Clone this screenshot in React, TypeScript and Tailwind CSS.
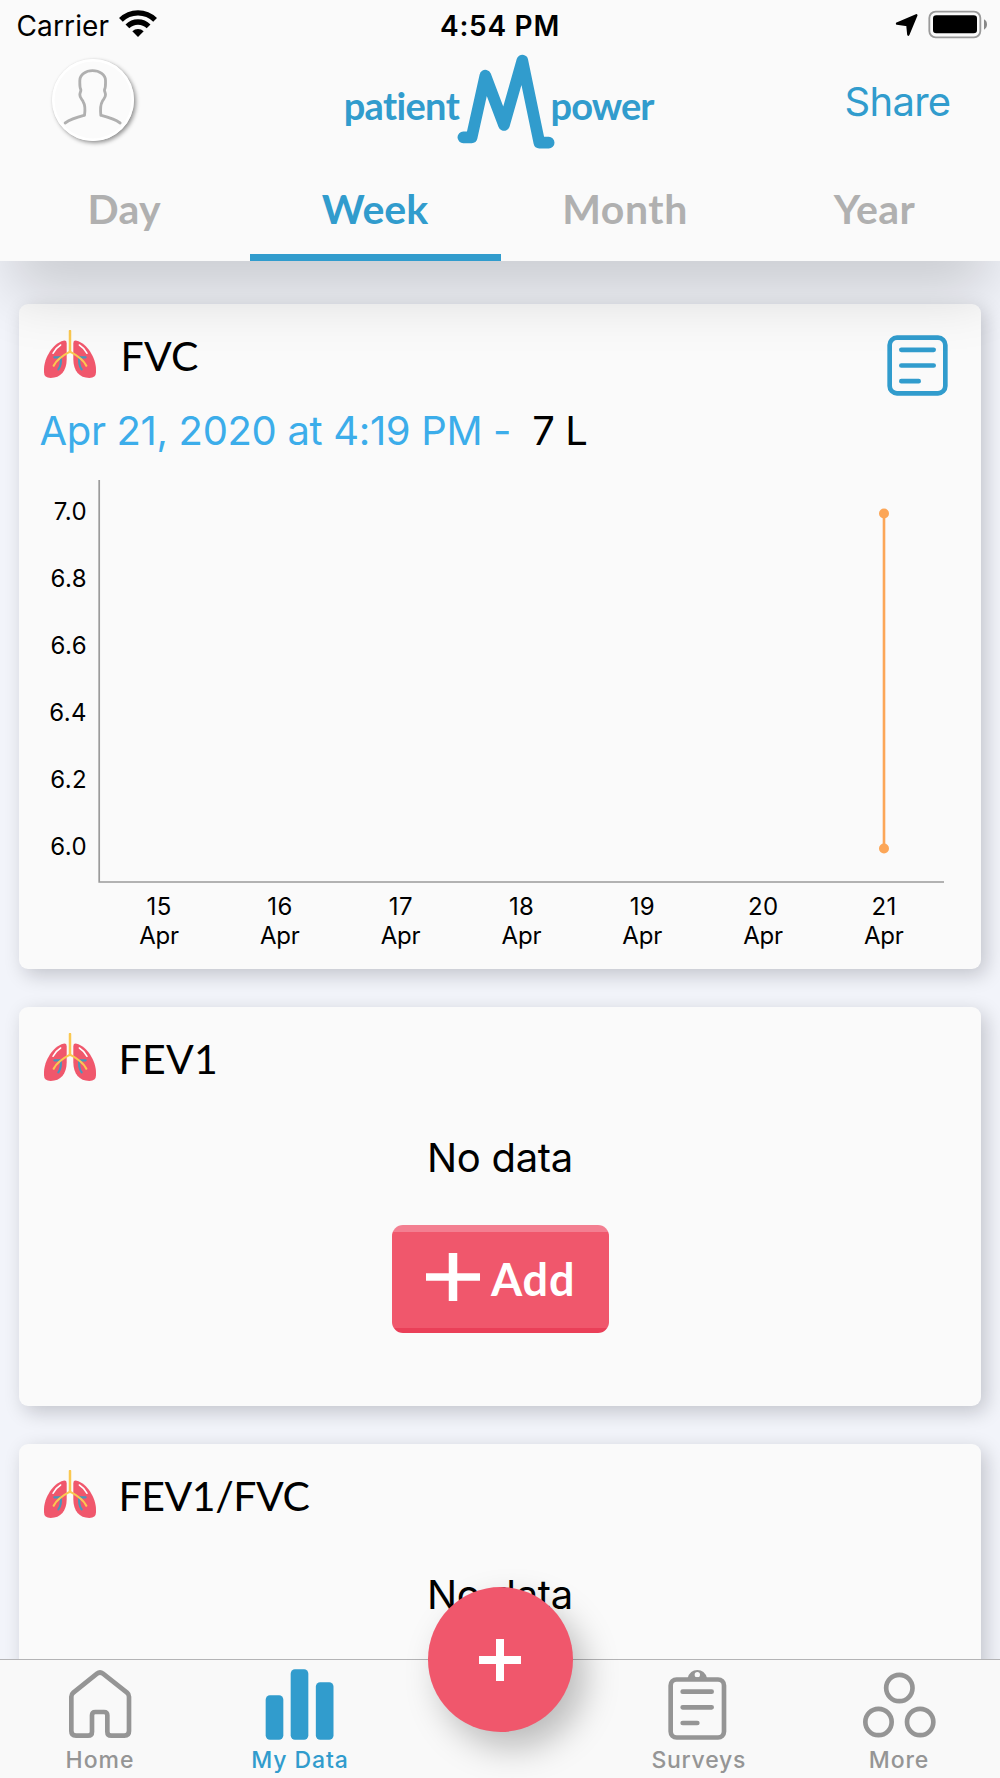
import type { ReactNode } from 'react';

const BLUE = '#319ccd';
const GREY = '#959595';

function StatusBar() {
  return (
    <div className="grid h-[50px] grid-cols-[1fr_340px_1fr] items-center text-[28px] leading-none text-black">
      <div className="flex items-center pl-[16.5px]">
        <span className="pt-[1px] tracking-[0.13px]">Carrier</span>
        <svg className="-mt-[4px] ml-[10px] h-[27px] w-[38px]" viewBox="358 29 114 81" fill="none" stroke="#000">
          <path d="M363.7 58.7A72.5 72.5 0 0 1 466.3 58.7" strokeWidth="16" />
          <path d="M383.2 78.2A45 45 0 0 1 446.8 78.2" strokeWidth="16" />
          <path d="M415 110L398 93A24 24 0 0 1 432 93Z" fill="#000" stroke="none" />
        </svg>
      </div>
      <div className="pt-[1px] text-center font-semibold tracking-[0.75px]">4:54 PM</div>
      <div className="flex items-center justify-end pr-[12px]">
        <svg className="h-[30px] w-[94px]" viewBox="702 29 282 90">
          <path d="M711 70L769 45L745 103L742 74Z" fill="#000" stroke="#000" strokeWidth="7" strokeLinejoin="round" />
          <rect x="808" y="34" width="153" height="77" rx="19" fill="none" stroke="#9a9a9a" strokeWidth="5.5" />
          <rect x="819" y="45" width="132" height="54" rx="10" fill="#000" />
          <path d="M972 57Q981 62 981 72Q981 83 972 88Z" fill="#888" />
        </svg>
      </div>
    </div>
  );
}

function NavBar() {
  return (
    <div className="grid h-[102px] grid-cols-[1fr_340px_1fr] items-center">
      <div className="pl-[51.5px]">
        <div className="-mt-[3px] size-[82px] rounded-full bg-[#fbfbfb] shadow-[2px_2px_4px_rgba(0,0,0,0.42),0_0_2px_rgba(0,0,0,0.06)] ring-[2.5px] ring-white ring-inset">
          <svg className="size-[82px]" viewBox="154.5 174 246 246" fill="none" stroke="#b0b0b0" strokeWidth="8.5" strokeLinecap="round" strokeLinejoin="round">
            <path d="M194 366C213 353 233 348 252 343C255 322 254 312 248 302C243 293 238 290 238 281C238 274 242 271 241 266C237 259 238 252 238 238C238 221 256 209 276 209C297 209 315 221 315 238C315 252 316 259 312 266C311 271 315 274 315 281C315 290 310 293 305 302C299 312 299 322 301 343C320 348 340 353 359 366" />
          </svg>
        </div>
      </div>
      <svg className="h-[102px] w-[340px]" viewBox="330 50 340 102">
        <text x="343.7" y="120" fill={BLUE} className="font-['Lato'] text-[38px] font-bold tracking-[-0.65px]">patient</text>
        <path transform="translate(330 0) scale(0.33333)" d="M400 412H425L466 227L522 375L577 182L628 428H656" fill="none" stroke={BLUE} strokeWidth="35" strokeLinecap="round" strokeLinejoin="round" />
        <text x="550.5" y="120" fill={BLUE} className="font-['Lato'] text-[38px] font-bold tracking-[-0.95px]">power</text>
      </svg>
      <div className="pt-[2px] pr-[49.5px] text-right text-[40px] leading-[50px] tracking-[-0.7px] text-[#319ccd]">Share</div>
    </div>
  );
}

function Tabs() {
  return (
    <div className="grid h-[109px] grid-cols-4 pt-[2px] text-center font-['Lato'] text-[41px] leading-[109px] font-bold text-[#b0b0b0]">
      <div className="-ml-[1.5px] tracking-[0.3px]">Day</div>
      <div className="relative h-[107px] text-[#319ccd]">
        Week
        <div className="absolute bottom-0 left-0 h-[7.5px] w-[251px] bg-[#319ccd]" />
      </div>
      <div className="tracking-[0.56px]">Month</div>
      <div className="-ml-[1px] tracking-[0.45px]">Year</div>
    </div>
  );
}

function LungHalf() {
  return (
    <g fill="none" strokeLinecap="round">
      <path d="M190 149C160 156 132 200 132 235V244Q132 261 152 261C182 261 200 240 200 205V156Q200 147 190 149Z" fill="#f0576c" />
      <path d="M159 187C165 176 172 168 182 162" stroke="#fff" strokeWidth="4.5" />
      <path d="M163 199H181M182 201C184 215 181 227 175 235" stroke="#4697bd" strokeWidth="6.5" />
      <path d="M210 182C193 191 171 204 161 224" stroke="#fac850" strokeWidth="6.5" />
    </g>
  );
}

function Lungs() {
  return (
    <svg className="-mt-[2px] h-[48.67px] w-[52px]" viewBox="132 117 156 146">
      <LungHalf />
      <g transform="translate(420 0) scale(-1 1)">
        <LungHalf />
      </g>
      <path d="M210 120V183" stroke="#fac850" strokeWidth="7.5" strokeLinecap="round" />
    </svg>
  );
}

function CardTitle({ children, className }: { children: ReactNode; className: string }) {
  return (
    <div className="flex h-[50px] items-center pl-[25px]">
      <Lungs />
      <h2 className={`pt-[2px] font-['Lato'] text-[41px] leading-[50px] ${className}`}>{children}</h2>
    </div>
  );
}

function Card({ children, className }: { children: ReactNode; className: string }) {
  return (
    <section className={`relative shrink-0 rounded-[9px] bg-[#fafafa] pt-[26px] shadow-[5px_6px_20px_rgba(0,0,20,0.2)] ${className}`}>
      {children}
    </section>
  );
}

const yTicks = ['7.0', '6.8', '6.6', '6.4', '6.2', '6.0'];
const days = [15, 16, 17, 18, 19, 20, 21];

function Chart() {
  return (
    <svg className="block h-[510px] w-[962px] text-[24px]" viewBox="19 455 962 510">
      <path d="M99.2 480V882H944" fill="none" stroke="#9b9b9b" strokeWidth="1.7" />
      {yTicks.map((t, i) => (
        <text key={t} x="87" y={519.5 + i * 67} textAnchor="end" className="tracking-[0.4px]">{t}</text>
      ))}
      {days.map((d, i) => (
        <g key={d} textAnchor="middle">
          <text x={159.2 + i * 120.8} y="914.7" className="tracking-[0.4px]">{d}</text>
          <text x={159 + i * 120.8} y="943.7" className="tracking-[-0.2px]">Apr</text>
        </g>
      ))}
      <g fill="#fca657">
        <path d="M884 513.5V848.5" stroke="#fca657" strokeWidth="2.6" />
        <circle cx="884" cy="513.5" r="5" />
        <circle cx="884" cy="848.5" r="5" />
      </g>
    </svg>
  );
}

function NoData() {
  return <div className="mt-[50px] text-center text-[40px] leading-[50px] tracking-[-0.3px]">No data</div>;
}

function NavItem({ label, viewBox, active, spacing, children }: { label: string; viewBox: string; active?: boolean; spacing: string; children: ReactNode }) {
  return (
    <div className={`flex flex-col items-center ${active ? 'text-[#319ccd]' : 'text-[#959595]'}`}>
      <svg className="h-[86px] w-[200px]" viewBox={viewBox} fill="none" preserveAspectRatio="xMidYMin">{children}</svg>
      <span className={`text-[23px] leading-[28px] font-medium ${spacing}`}>{label}</span>
    </div>
  );
}

export default function App() {
  return (
    <div className="relative flex h-[1778px] w-[1000px] flex-col overflow-hidden bg-[#f2f4fa] font-['Inter',sans-serif] text-black">
      <header className="relative z-10 shrink-0 bg-[#fafafa] shadow-[0_43px_56px_-10px_rgba(0,0,0,0.155)]">
        <StatusBar />
        <NavBar />
        <Tabs />
      </header>

      <main className="flex min-h-0 flex-1 flex-col gap-[38px] overflow-hidden pt-[43px] pr-[19px] pl-[19px]">
        <Card className="h-[665px]">
          <CardTitle className="ml-[24.5px] tracking-[0.19px]">FVC</CardTitle>
          <svg className="absolute top-[31px] right-[33px] h-[61px] w-[61px]" viewBox="201 105 183 183" fill="none" stroke={BLUE} strokeWidth="14" strokeLinecap="round">
            <rect x="209" y="113" width="167" height="167" rx="22" />
            <path d="M244 149.5H341M244 196.5H341M244 243.5H296" />
          </svg>
          <div className="mt-[26px] -mb-[1px] flex pl-[20.5px] text-[40px] leading-[50px] whitespace-pre">
            <span className="tracking-[-0.34px] text-[#3cadea]">Apr 21, 2020 at 4:19 PM -</span>
            <span className="ml-[21px] tracking-[-0.4px]">7 L</span>
          </div>
          <Chart />
        </Card>

        <Card className="h-[399px]">
          <CardTitle className="ml-[22.5px] tracking-[0.29px]">FEV1</CardTitle>
          <NoData />
          <button className="mt-[42px] ml-[372.5px] flex h-[108px] w-[217px] items-center gap-[11px] overflow-hidden rounded-[11px] bg-[linear-gradient(#f37f91_7px,#f0576c_7px_103.5px,#ea3f58_103.5px)] pl-[34.5px] text-white">
            <svg className="-mt-[5px] h-[48px] w-[54px]" viewBox="0 0 54 48" stroke="#fff">
              <path d="M0 24H54" strokeWidth="7.5" />
              <path d="M27 0V48" strokeWidth="8.5" />
            </svg>
            <span className="font-['Lato'] text-[45px] leading-[50px] font-bold tracking-[0.84px]">Add</span>
          </button>
        </Card>

        <Card className="h-[399px]">
          <CardTitle className="ml-[22.5px] tracking-[-0.44px]">FEV1/FVC</CardTitle>
          <NoData />
        </Card>
      </main>

      <nav className="relative grid h-[119px] shrink-0 grid-cols-5 border-t border-[#b4b4b6] bg-[#f9f9f9]">
        <NavItem label="Home" viewBox="0 690 600 255" spacing="tracking-[1px]">
          <path d="M214 800Q214 793 220 788L291 731Q300 724 309 731L381 788Q387 793 387 800V903Q387 917 373 917H334Q322 917 322 905V856Q322 846 312 846H286Q276 846 276 856V905Q276 917 264 917H228Q214 917 214 903Z" stroke={GREY} strokeWidth="14" strokeLinejoin="round" />
        </NavItem>
        <NavItem label="My Data" viewBox="600 690 600 255" active spacing="tracking-[0.9px]">
          <g fill={BLUE}>
            <rect x="797" y="796" width="53" height="133" rx="13" />
            <rect x="872" y="718" width="53" height="211" rx="13" />
            <rect x="947.5" y="757" width="53" height="172" rx="13" />
          </g>
        </NavItem>
        <div className="flex justify-center">
          <button className="absolute -top-[73px] left-[427.5px] flex size-[145px] items-center justify-center rounded-full bg-[#f0576c] shadow-[12px_16px_34px_rgba(0,0,0,0.25)]">
            <svg className="size-[42px]" viewBox="0 0 42 42" stroke="#fff" strokeWidth="8">
              <path d="M0 21H42M21 0V42" />
            </svg>
          </button>
        </div>
        <NavItem label="Surveys" viewBox="-90 60 600 255" spacing="-ml-[2.5px] tracking-[0.75px]">
          <g stroke={GREY} strokeWidth="14" strokeLinecap="round">
            <rect x="122" y="118.5" width="160" height="174" rx="18" />
            <path d="M158 155H245M158 202H245M158 249H202" />
          </g>
          <path fillRule="evenodd" d="M173 114Q180 90 202 90Q224 90 231 114ZM202 96A8 8 0 1 0 202 112A8 8 0 1 0 202 96Z" fill={GREY} />
        </NavItem>
        <NavItem label="More" viewBox="510 60 600 255" spacing="-ml-[2px] tracking-[0.89px]">
          <g stroke={GREY} strokeWidth="14">
            <circle cx="808" cy="144" r="39.5" />
            <circle cx="745.5" cy="246" r="39.5" />
            <circle cx="870.5" cy="246" r="39.5" />
          </g>
        </NavItem>
      </nav>
    </div>
  );
}
